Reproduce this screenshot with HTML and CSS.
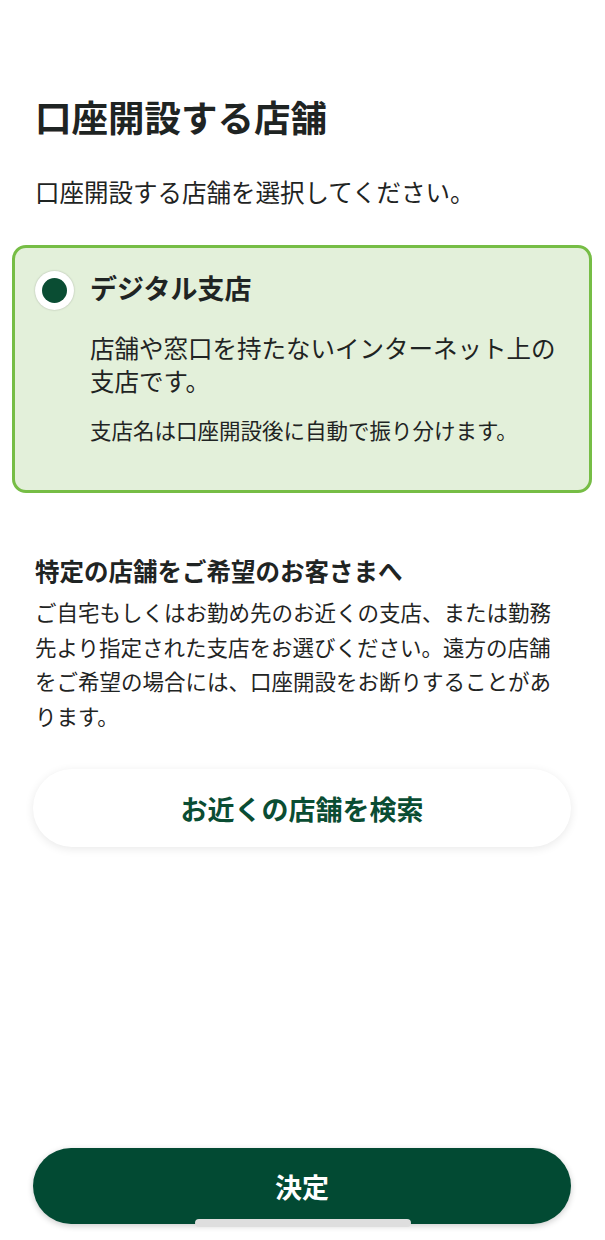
FILE: index.html
```html
<!DOCTYPE html>
<html lang="ja">
<head>
<meta charset="utf-8">
<title>口座開設する店舗</title>
<link rel="stylesheet" href="styles.css">
</head>
<body>
<div class="screen">
  <main class="content">
    <h1 class="title">口座開設する店舗</h1>
    <p class="lead">口座開設する店舗を選択してください。</p>

    <div class="card">
      <div class="radio"><span class="radio-dot"></span></div>
      <div class="card-body">
        <div class="card-title">デジタル支店</div>
        <p class="card-text">店舗や窓口を持たないインターネット上の支店です。</p>
        <p class="card-note">支店名は口座開設後に自動で振り分けます。</p>
      </div>
    </div>

    <section class="info">
      <h2 class="info-title">特定の店舗をご希望のお客さまへ</h2>
      <p class="info-text">ご自宅もしくはお勤め先のお近くの支店、または勤務先より指定された支店をお選びください。遠方の店舗をご希望の場合には、口座開設をお断りすることがあります。</p>
    </section>

    <button class="btn-search" type="button">お近くの店舗を検索</button>
  </main>

  <footer class="footer">
    <button class="btn-submit" type="button">決定</button>
  </footer>
  <div class="home-indicator"></div>
</div>
</body>
</html>
```
FILE: styles.css
```css
* { box-sizing: border-box; }
html, body {
  margin: 0;
  padding: 0;
  background: #ffffff;
}
body {
  font-family: "Noto Sans CJK JP", "Noto Sans", sans-serif;
  color: #1f2423;
}
.screen {
  position: relative;
  width: 605px;
  height: 1240px;
  display: flex;
  flex-direction: column;
  overflow: hidden;
}
.content {
  display: flex;
  flex-direction: column;
  padding: 93px 0 0;
}
.title {
  margin: 0 0 0 35px;
  font-size: 36.5px;
  line-height: 48px;
  font-weight: 700;
}
.lead {
  margin: 35px 0 0 35px;
  font-size: 24.5px;
  line-height: 32px;
}
.card {
  margin: 37px 13px 0 12px;
  border: 3px solid #76bd45;
  border-radius: 14px;
  background: #e3f0da;
  display: flex;
  align-items: flex-start;
  gap: 16px;
  padding: 22px 20px 45px 20px;
}
.radio {
  flex: none;
  width: 39px;
  height: 39px;
  margin-top: 1px;
  border-radius: 50%;
  background: #ffffff;
  box-shadow: 0 0 2px rgba(0,0,0,0.25);
  display: flex;
  align-items: center;
  justify-content: center;
}
.radio-dot {
  width: 25px;
  height: 25px;
  border-radius: 50%;
  background: #0a4d33;
}
.card-body {
  flex: 1;
}
.card-title {
  font-size: 27px;
  font-weight: 700;
  line-height: 36px;
}
.card-text {
  margin: 25px 0 0;
  font-size: 24.5px;
  line-height: 33px;
}
.card-note {
  margin: 18px 0 0;
  font-size: 21.5px;
  line-height: 30px;
}
.info {
  margin: 61px 0 0 35px;
  padding-right: 33px;
}
.info-title {
  margin: 0;
  font-size: 24.5px;
  font-weight: 700;
  line-height: 34px;
}
.info-text {
  margin: 7px 0 0;
  font-size: 21.5px;
  line-height: 34.5px;
}
.btn-search {
  margin: 36px 34px 0 33px;
  height: 78px;
  border: none;
  border-radius: 39px;
  background: #ffffff;
  box-shadow: 0 2px 10px rgba(0,0,0,0.09);
  font-family: inherit;
  font-size: 27px;
  font-weight: 700;
  color: #0a4d33;
}
.footer {
  margin-top: auto;
  padding: 0 34px 16px 33px;
}
.btn-submit {
  width: 100%;
  height: 76px;
  border: none;
  border-radius: 38px;
  background: #024a33;
  box-shadow: 0 2px 6px rgba(0,0,0,0.2);
  font-family: inherit;
  font-size: 27px;
  font-weight: 700;
  color: #ffffff;
}
.home-indicator {
  position: absolute;
  left: 195px;
  bottom: 13px;
  width: 216px;
  height: 8px;
  border-radius: 4px;
  background: #dedede;
}
```
